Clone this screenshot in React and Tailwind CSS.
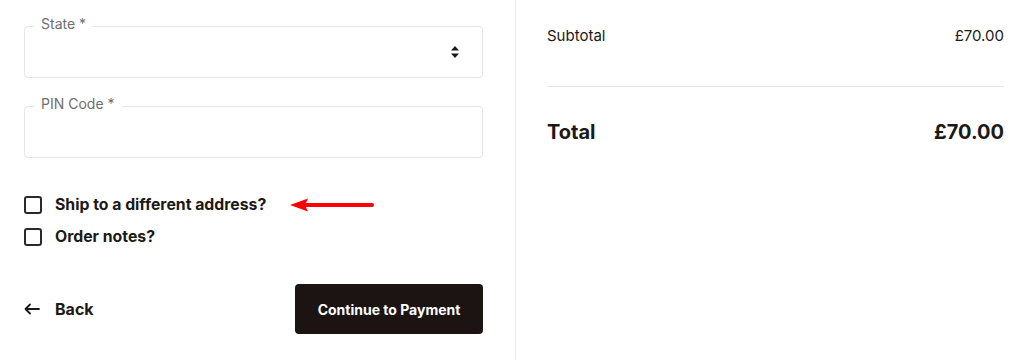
import React from "react";

function SelectArrows() {
  return (
    <svg width="10" height="14" viewBox="0 0 10 14" className="text-[#1a1a1a]">
      <path d="M5 1 L9 5.5 H1 Z" fill="currentColor" />
      <path d="M5 13 L9 8.5 H1 Z" fill="currentColor" />
    </svg>
  );
}

function Field({ label, select }) {
  return (
    <fieldset className="border border-[#e6e6e6] rounded-[4px] h-[61px] px-0">
      <legend className="ml-[9px] px-[7px] text-[14px] leading-[14px] pb-[4px] text-[#6e6e6e]">{label}</legend>
      {select && (
        <div className="flex justify-end pr-[22px] pt-[10px]">
          <SelectArrows />
        </div>
      )}
    </fieldset>
  );
}

function Check({ children }) {
  return (
    <label className="flex items-center gap-[13px] h-[18px]">
      <span className="w-[18px] h-[18px] border-2 border-[#2a2a2a] rounded-[3px]"></span>
      <span className="text-[15.8px] font-bold text-[#1c1916]">{children}</span>
    </label>
  );
}

export default function App() {
  return (
    <div className="w-[1024px] h-[360px] bg-white flex overflow-hidden" style={{ fontFamily: "Inter, 'Noto Sans', sans-serif" }}>
      <div className="w-[516px] border-r border-[#ececec] pl-6 pr-8 pt-[17px]">
        <div className="flex flex-col gap-[19px]">
          <Field label="State *" select />
          <Field label="PIN Code *" />
        </div>
        <div className="mt-[38px] flex flex-col gap-[14px]">
          <div className="flex items-center">
            <Check>Ship to a different address?</Check>
            <svg width="86" height="16" viewBox="0 0 86 16" className="ml-[23px]">
              <path d="M14 8 H83" stroke="#f00" strokeWidth="4" strokeLinecap="round" />
              <path d="M1 8 L19 1.5 L16 8 L19 14.5 Z" fill="#f00" />
            </svg>
          </div>
          <Check>Order notes?</Check>
        </div>
        <div className="mt-[38px] flex items-center justify-between">
          <div className="flex items-center gap-[15px] text-[#1c1916]">
            <svg width="16" height="12" viewBox="0 0 16 12" fill="none" stroke="currentColor" strokeWidth="1.8" strokeLinecap="round" strokeLinejoin="round">
              <path d="M15 6 H1.5 M6 1.5 L1.5 6 L6 10.5" />
            </svg>
            <span className="text-[16px] font-bold">Back</span>
          </div>
          <button className="w-[188px] h-[50px] rounded-[4px] bg-[#1b1412] text-white text-[14px] font-bold">
            Continue to Payment
          </button>
        </div>
      </div>
      <div className="flex-1 pl-[31px] pr-5 pt-[26px] text-[#1c1916]">
        <div className="flex justify-between text-[15px] leading-5">
          <span>Subtotal</span>
          <span>£70.00</span>
        </div>
        <div className="mt-[40px] border-t border-[#e8e8e8]"></div>
        <div className="mt-[31px] flex justify-between text-[20px] font-bold leading-7">
          <span>Total</span>
          <span>£70.00</span>
        </div>
      </div>
    </div>
  );
}
